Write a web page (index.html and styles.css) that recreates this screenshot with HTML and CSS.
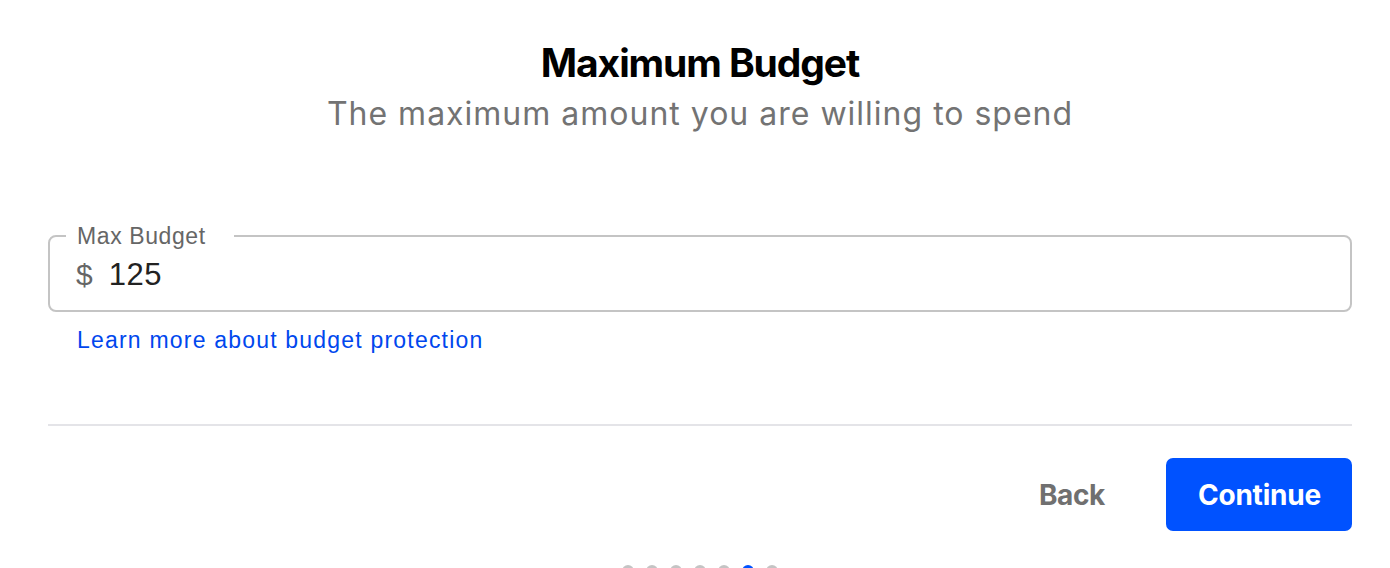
FILE: index.html
```html
<!DOCTYPE html>
<html lang="en">
<head>
  <meta charset="UTF-8" />
  <title>Maximum Budget</title>
  <link rel="stylesheet" href="styles.css">
</head>
<body>
  <div class="step">
    <div class="header">
      <h1 class="title">Maximum Budget</h1>
      <p class="subtitle">The maximum amount you are willing to spend</p>
    </div>

    <fieldset class="field">
      <legend class="field-label">Max Budget</legend>
      <div class="field-row">
        <span class="currency">$</span>
        <span class="amount">125</span>
      </div>
    </fieldset>
    <a class="help-link" href="#">Learn more about budget protection</a>

    <hr class="divider" />

    <div class="actions">
      <button class="btn btn-back">Back</button>
      <button class="btn btn-primary">Continue</button>
    </div>

    <div class="dots">
      <span class="dot"></span>
      <span class="dot"></span>
      <span class="dot"></span>
      <span class="dot"></span>
      <span class="dot"></span>
      <span class="dot active"></span>
      <span class="dot"></span>
    </div>
  </div>
</body>
</html>
```

FILE: styles.css
```css
body {
  margin: 0;
  font-family: Inter, 'Liberation Sans', sans-serif;
  background-color: #fff;
  color: #000;
  overflow: hidden;
}
.step {
  padding: 39px 38px 0 48px;
}
.header {
  text-align: center;
}
.title {
  margin: 0;
  font-size: 39px;
  line-height: 48px;
  font-weight: 700;
  letter-spacing: -1.1px;
}
.subtitle {
  margin: 8px 0 0;
  font-size: 32px;
  line-height: 38px;
  color: #737373;
  letter-spacing: 1px;
}
.field {
  margin: 91px 0 0;
  padding: 9px 16px 18px;
  border: 2px solid #c4c4c4;
  border-radius: 8px;
  font-family: 'Liberation Sans', Arial, sans-serif;
}
.field-label {
  padding: 0 28px 0 11px;
  font-size: 23px;
  line-height: 24px;
  color: #666;
  letter-spacing: 0.6px;
}
.field-row {
  display: flex;
  align-items: baseline;
  padding-left: 10px;
  line-height: 35px;
}
.currency {
  font-size: 30px;
  color: #666;
}
.amount {
  margin-left: 16px;
  font-size: 31px;
  color: #222;
  letter-spacing: 0.5px;
}
.help-link {
  display: block;
  margin: 15px 0 0 29px;
  font-family: 'Liberation Sans', Arial, sans-serif;
  font-size: 23px;
  line-height: 26px;
  color: #0047ee;
  text-decoration: none;
  letter-spacing: 1.2px;
}
.divider {
  margin: 71px 0 0;
  border: none;
  border-top: 2px solid #e4e4e8;
}
.actions {
  display: flex;
  justify-content: flex-end;
  gap: 29px;
  margin-top: 32px;
}
.btn {
  height: 73px;
  padding: 0 32px;
  border: none;
  border-radius: 7px;
  font-family: Inter, sans-serif;
  font-size: 28px;
  font-weight: 700;
  cursor: pointer;
}
.btn-back {
  background: none;
  color: #707070;
  letter-spacing: -0.4px;
}
.btn-primary {
  padding: 0 31px 0 32px;
  background-color: #0052ff;
  color: #fff;
  letter-spacing: -0.2px;
}
.dots {
  display: flex;
  justify-content: center;
  gap: 12px;
  margin-top: 34px;
}
.dot {
  width: 12px;
  height: 12px;
  border-radius: 50%;
  background-color: #c4c4c4;
}
.dot.active {
  background-color: #0052ff;
}
```
